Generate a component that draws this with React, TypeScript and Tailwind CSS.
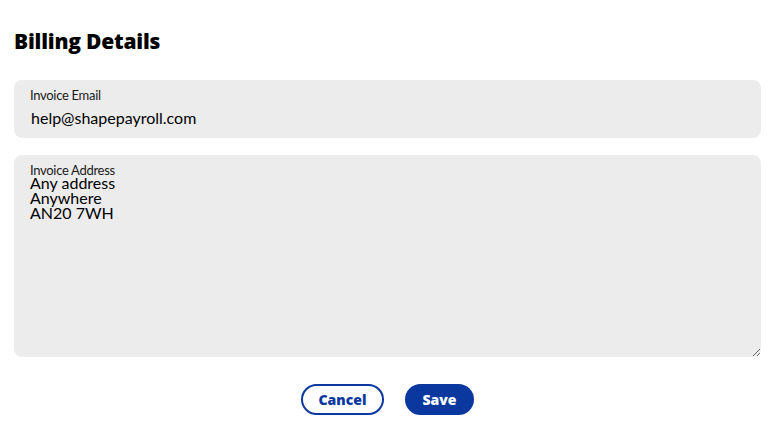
import React from 'react';

const App: React.FC = () => {
  return (
    <div className="w-[775px] h-[437px] bg-white px-[14px] pt-[27px] font-['Lato','Open_Sans',sans-serif] text-black">
      <h1 className="text-[21px] leading-[28px] font-black tracking-[-0.2px] font-['Open_Sans','Lato',sans-serif]">
        Billing Details
      </h1>

      <div className="mt-[25px] h-[58px] rounded-[8px] bg-[#ececec] px-[16px] pt-[7px]">
        <label className="block text-[13px] leading-[16px] tracking-[-0.3px] text-[#1a1a1a]">Invoice Email</label>
        <input
          defaultValue="help@shapepayroll.com"
          className="mt-[5px] w-full bg-transparent pl-[1px] text-[16px] leading-[20px] outline-none"
        />
      </div>

      <div className="relative mt-[17px] h-[202px]">
        <label className="absolute left-[16px] top-[7px] z-10 text-[13px] leading-[16px] tracking-[-0.3px] text-[#1a1a1a]">
          Invoice Address
        </label>
        <textarea
          defaultValue={'Any address\nAnywhere\nAN20 7WH'}
          className="block h-full w-full rounded-[8px] bg-[#ececec] pl-[16px] pr-[16px] pt-[20px] text-[16px] leading-[15px] outline-none"
        />
      </div>

      <div className="mt-[27px] flex justify-center gap-[21px] font-['Open_Sans','Lato',sans-serif]">
        <button className="h-[31px] w-[83px] rounded-full border-2 border-[#0a389f] text-[14px] font-extrabold text-[#0a389f]">
          Cancel
        </button>
        <button className="h-[31px] w-[69px] rounded-full bg-[#0a389f] text-[14px] font-extrabold text-white">
          Save
        </button>
      </div>
    </div>
  );
};

export default App;
